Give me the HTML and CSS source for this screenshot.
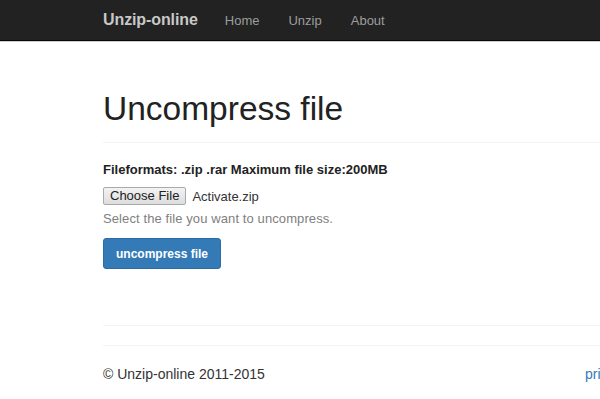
FILE: index.html
```html
<!DOCTYPE html>
<html>
<head>
<meta charset="utf-8">
<link rel="stylesheet" href="styles.css">
</head>
<body>
<nav class="navbar">
  <div class="nav-inner">
    <a class="brand">Unzip-online</a>
    <ul class="nav-links">
      <li><a>Home</a></li>
      <li><a>Unzip</a></li>
      <li><a>About</a></li>
    </ul>
  </div>
</nav>
<main class="container">
  <div class="page-header">
    <h1>Uncompress file</h1>
  </div>
  <form class="upload">
    <p class="formats">Fileformats: .zip .rar Maximum file size:200MB</p>
    <div class="file-row">
      <span class="file-btn">Choose File</span>
      <span class="file-name">Activate.zip</span>
    </div>
    <p class="help">Select the file you want to uncompress.</p>
    <span class="btn-primary">uncompress file</span>
  </form>
  <hr class="rule rule-a">
  <hr class="rule rule-b">
  <footer class="footer">
    <span>© Unzip-online 2011-2015</span>
    <a class="footer-link">privacy</a>
  </footer>
</main>
</body>
</html>
```
FILE: styles.css
```css
html, body {
  margin: 0;
  padding: 0;
  background: #ffffff;
  font-family: "Liberation Sans", Arial, sans-serif;
  color: #333333;
  overflow: hidden;
}
.navbar {
  height: 40px;
  background: #222222;
  border-bottom: 1px solid #080808;
  box-shadow: 0 1px 0 #cfcfcf;
}
.nav-inner {
  display: flex;
  align-items: center;
  height: 40px;
  padding-left: 103px;
}
.brand {
  color: #c8c8c8;
  font-size: 16px;
  font-weight: bold;
  margin-right: 27px;
  letter-spacing: -0.1px;
}
.nav-links {
  display: flex;
  list-style: none;
  margin: 0;
  padding: 0;
  gap: 29px;
}
.nav-links a {
  color: #9d9d9d;
  font-size: 13px;
}
.container {
  padding-left: 103px;
}
.page-header {
  margin-top: 48px;
  border-bottom: 1px solid #f3f3f3;
  padding-bottom: 13px;
  margin-right: -20px;
}
h1 {
  margin: 0;
  font-size: 33.5px;
  font-weight: normal;
  color: #222222;
  line-height: 40px;
}
.upload {
  margin-top: 19px;
  display: flex;
  flex-direction: column;
  align-items: flex-start;
}
.formats {
  margin: 0;
  font-size: 13px;
  font-weight: bold;
  color: #222;
  line-height: 16px;
}
.file-row {
  display: flex;
  align-items: center;
  margin-top: 9px;
  gap: 6px;
}
.file-btn {
  display: inline-block;
  font-size: 13px;
  color: #222;
  background: linear-gradient(#f3f3f3, #dddddd);
  border: 1px solid #a9a9a9;
  border-radius: 2px;
  padding: 0 6px;
  line-height: 16px;
}
.file-name {
  font-size: 13px;
  color: #333;
}
.help {
  margin: 7px 0 0 0;
  font-size: 13px;
  color: #808080;
  line-height: 14px;
  letter-spacing: 0.1px;
}
.btn-primary {
  display: block;
  margin-top: 12px;
  background: #337ab7;
  border: 1px solid #2e6da4;
  border-radius: 3px;
  color: #ffffff;
  font-size: 12px;
  font-weight: bold;
  padding: 7px 12px 6px 12px;
  line-height: 16px;
}
.rule {
  border: 0;
  margin: 0;
  height: 0;
  margin-right: -20px;
}
.rule-a {
  margin-top: 56px;
  border-top: 1px solid #f3f3f3;
}
.rule-b {
  margin-top: 19px;
  border-top: 1px solid #f3f3f3;
}
.footer {
  display: flex;
  justify-content: space-between;
  margin-top: 20px;
  font-size: 14px;
  color: #333;
  line-height: 16px;
}
.footer-link {
  color: #337ab7;
  margin-right: -40px;
  width: 55px;
  overflow: hidden;
}
```
